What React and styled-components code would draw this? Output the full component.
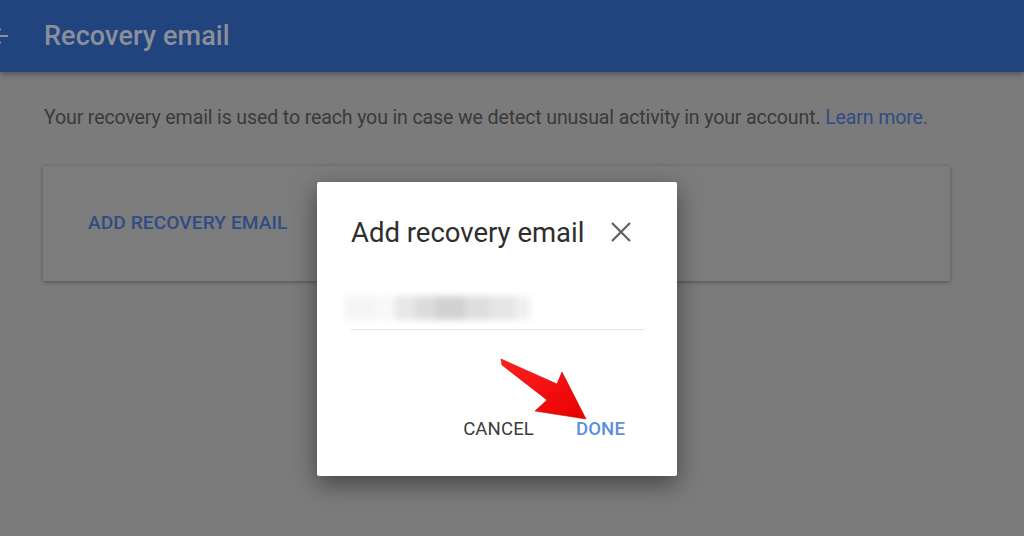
import React from "react";
import styled, { createGlobalStyle } from "styled-components";

const Global = createGlobalStyle`
  html, body { margin: 0; padding: 0; }
  body {
    background: #7b7b7b;
    font-family: Roboto, "Liberation Sans", Arial, sans-serif;
    width: 1024px;
    height: 536px;
    overflow: hidden;
  }
`;

const Page = styled.div`
  position: relative;
  width: 1024px;
  height: 536px;
  background: #7b7b7b;
`;

const Header = styled.header`
  height: 72px;
  background: #22447e;
  display: flex;
  align-items: center;
  box-shadow: 0 2px 6px rgba(0, 0, 0, 0.35);
`;

const BackButton = styled.div`
  width: 44px;
  height: 72px;
  display: flex;
  align-items: center;
  margin-left: -12px;
  margin-right: 12px;
`;

const Title = styled.h1`
  margin: 0;
  font-size: 27px;
  font-weight: 500;
  color: #8a8f99;
  letter-spacing: 0.1px;
`;

const Content = styled.main`
  padding: 30px 74px 0 43px;
`;

const Intro = styled.p`
  margin: 0 0 0 1px;
  font-size: 19.6px;
  line-height: 32px;
  color: #3a3a3a;
  letter-spacing: -0.15px;
  white-space: nowrap;
`;

const Link = styled.span`
  color: #2f4c84;
`;

const Card = styled.section`
  margin-top: 32px;
  height: 115px;
  background: #7c7c7c;
  box-shadow: 0 1px 4px rgba(0, 0, 0, 0.35);
  display: flex;
  align-items: center;
  padding-left: 45px;
  padding-bottom: 2px;
  box-sizing: border-box;
`;

const TextButton = styled.button`
  border: none;
  background: none;
  padding: 0;
  font-family: inherit;
  font-size: ${(p) => p.$size || 18.6}px;
  font-weight: ${(p) => p.$weight || 500};
  letter-spacing: 0.1px;
  color: ${(p) => p.$color};
  line-height: 22px;
  cursor: pointer;
`;

const Dialog = styled.div`
  position: absolute;
  left: 317px;
  top: 182px;
  width: 360px;
  height: 294px;
  box-sizing: border-box;
  background: #ffffff;
  box-shadow: 0 8px 24px rgba(0, 0, 0, 0.45);
  border-radius: 2px;
  padding: 34px 34px 0 34px;
  display: flex;
  flex-direction: column;
`;

const DialogHead = styled.div`
  display: flex;
  align-items: center;
  justify-content: space-between;
  height: 32px;
`;

const DialogTitle = styled.h2`
  margin: 0;
  font-size: 27.5px;
  font-weight: 400;
  color: #2e2e2e;
`;

const Close = styled.div`
  width: 28px;
  height: 28px;
  display: flex;
  align-items: center;
  justify-content: center;
  margin-right: 8px;
`;

const Field = styled.div`
  margin-top: 33px;
  height: 48px;
  border-bottom: 1px solid #e3e3e3;
  position: relative;
  margin-right: -1px;
`;

const Blur = styled.div`
  position: absolute;
  left: -6px;
  top: 15px;
  display: flex;
  filter: blur(3px);
`;

const Block = styled.div`
  width: ${(p) => p.$w}px;
  height: 24px;
  background: ${(p) => p.$c};
`;

const Actions = styled.div`
  margin-top: 88px;
  display: flex;
  justify-content: flex-end;
  gap: 42px;
  margin-right: 18px;
`;

const Arrow = styled.svg`
  position: absolute;
  left: 490px;
  top: 350px;
  overflow: visible;
`;

export default function App() {
  return (
    <>
      <Global />
      <Page>
        <Header>
          <BackButton>
            <svg width="24" height="24" viewBox="0 0 24 24">
              <path d="M20 11H7.83l5.59-5.59L12 4l-8 8 8 8 1.41-1.41L7.83 13H20v-2z" fill="#8a8f99" />
            </svg>
          </BackButton>
          <Title>Recovery email</Title>
        </Header>
        <Content>
          <Intro>
            Your recovery email is used to reach you in case we detect unusual activity in your account.{" "}
            <Link>Learn more.</Link>
          </Intro>
          <Card>
            <TextButton $color="#2f4c84" $size={19.1}>ADD RECOVERY EMAIL</TextButton>
          </Card>
        </Content>
        <Dialog>
          <DialogHead>
            <DialogTitle>Add recovery email</DialogTitle>
            <Close>
              <svg width="20" height="20" viewBox="0 0 20 20">
                <path d="M1 1L19 19M19 1L1 19" stroke="#5f5f5f" strokeWidth="2.2" />
              </svg>
            </Close>
          </DialogHead>
          <Field>
            <Blur>
              <Block $w={30} $c="#f5f5f5" />
              <Block $w={20} $c="#f8f8f8" />
              <Block $w={20} $c="#e8e8e8" />
              <Block $w={20} $c="#dcdcdc" />
              <Block $w={30} $c="#d2d2d2" />
              <Block $w={25} $c="#dedede" />
              <Block $w={25} $c="#e6e6e6" />
              <Block $w={15} $c="#f0f0f0" />
            </Blur>
          </Field>
          <Actions>
            <TextButton $color="#3c3c3c" $weight={400}>CANCEL</TextButton>
            <TextButton $color="#5b8fdb" $weight={500}>DONE</TextButton>
          </Actions>
        </Dialog>
        <Arrow width="100" height="75" viewBox="0 0 100 75">
          <defs>
            <linearGradient id="ag" x1="0" y1="0" x2="1" y2="1">
              <stop offset="0" stopColor="#ff2020" />
              <stop offset="1" stopColor="#e80000" />
            </linearGradient>
          </defs>
          <polygon
            points="11,9 67,34 72,22 96,69 45,61 57,50 12,15"
            fill="url(#ag)"
            stroke="#d00000"
            strokeWidth="0.6"
            strokeLinejoin="round"
          />
        </Arrow>
      </Page>
    </>
  );
}
